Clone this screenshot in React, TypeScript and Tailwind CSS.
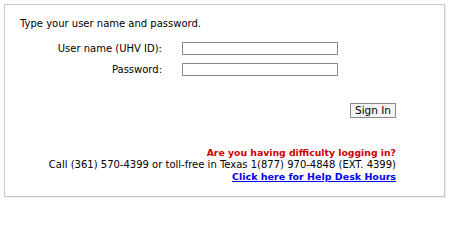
export default function App() {
  return (
    <div className="w-[450px] h-[201px] bg-white p-1 font-['DejaVu_Sans',Verdana,sans-serif] text-[10px] text-black">
      <div className="h-[193px] w-[441px] border border-[#cacaca] shadow-[1px_1px_0_#ececec] pl-[15px] pr-[48px] pt-[13px]">
        <p className="leading-[12px]">Type your user name and password.</p>

        <div className="mt-[12px] grid grid-cols-[142px_156px] gap-x-5 gap-y-[8px] items-center">
          <label className="text-right leading-[12px]">User name (UHV ID):</label>
          <input type="text" className="h-[13px] border border-[#8a8a8a] bg-white" />
          <label className="text-right leading-[12px]">Password:</label>
          <input type="password" className="h-[13px] border border-[#8a8a8a] bg-white" />
        </div>

        <div className="mt-[27px] flex justify-end">
          <button className="h-[15px] w-[46px] border border-[#8a8a8a] bg-[#f4f4f4] text-[10.5px] leading-[13px] text-black">
            Sign In
          </button>
        </div>

        <div className="mt-[29px] flex flex-col items-end leading-[12px]">
          <p className="font-bold text-[9.3px] text-[#cc0000]">Are you having difficulty logging in?</p>
          <p>Call (361) 570-4399 or toll-free in Texas 1(877) 970-4848 (EXT. 4399)</p>
          <a href="#" className="font-bold text-[9.5px] text-[#0000ee] underline">
            Click here for Help Desk Hours
          </a>
        </div>
      </div>
    </div>
  );
}
